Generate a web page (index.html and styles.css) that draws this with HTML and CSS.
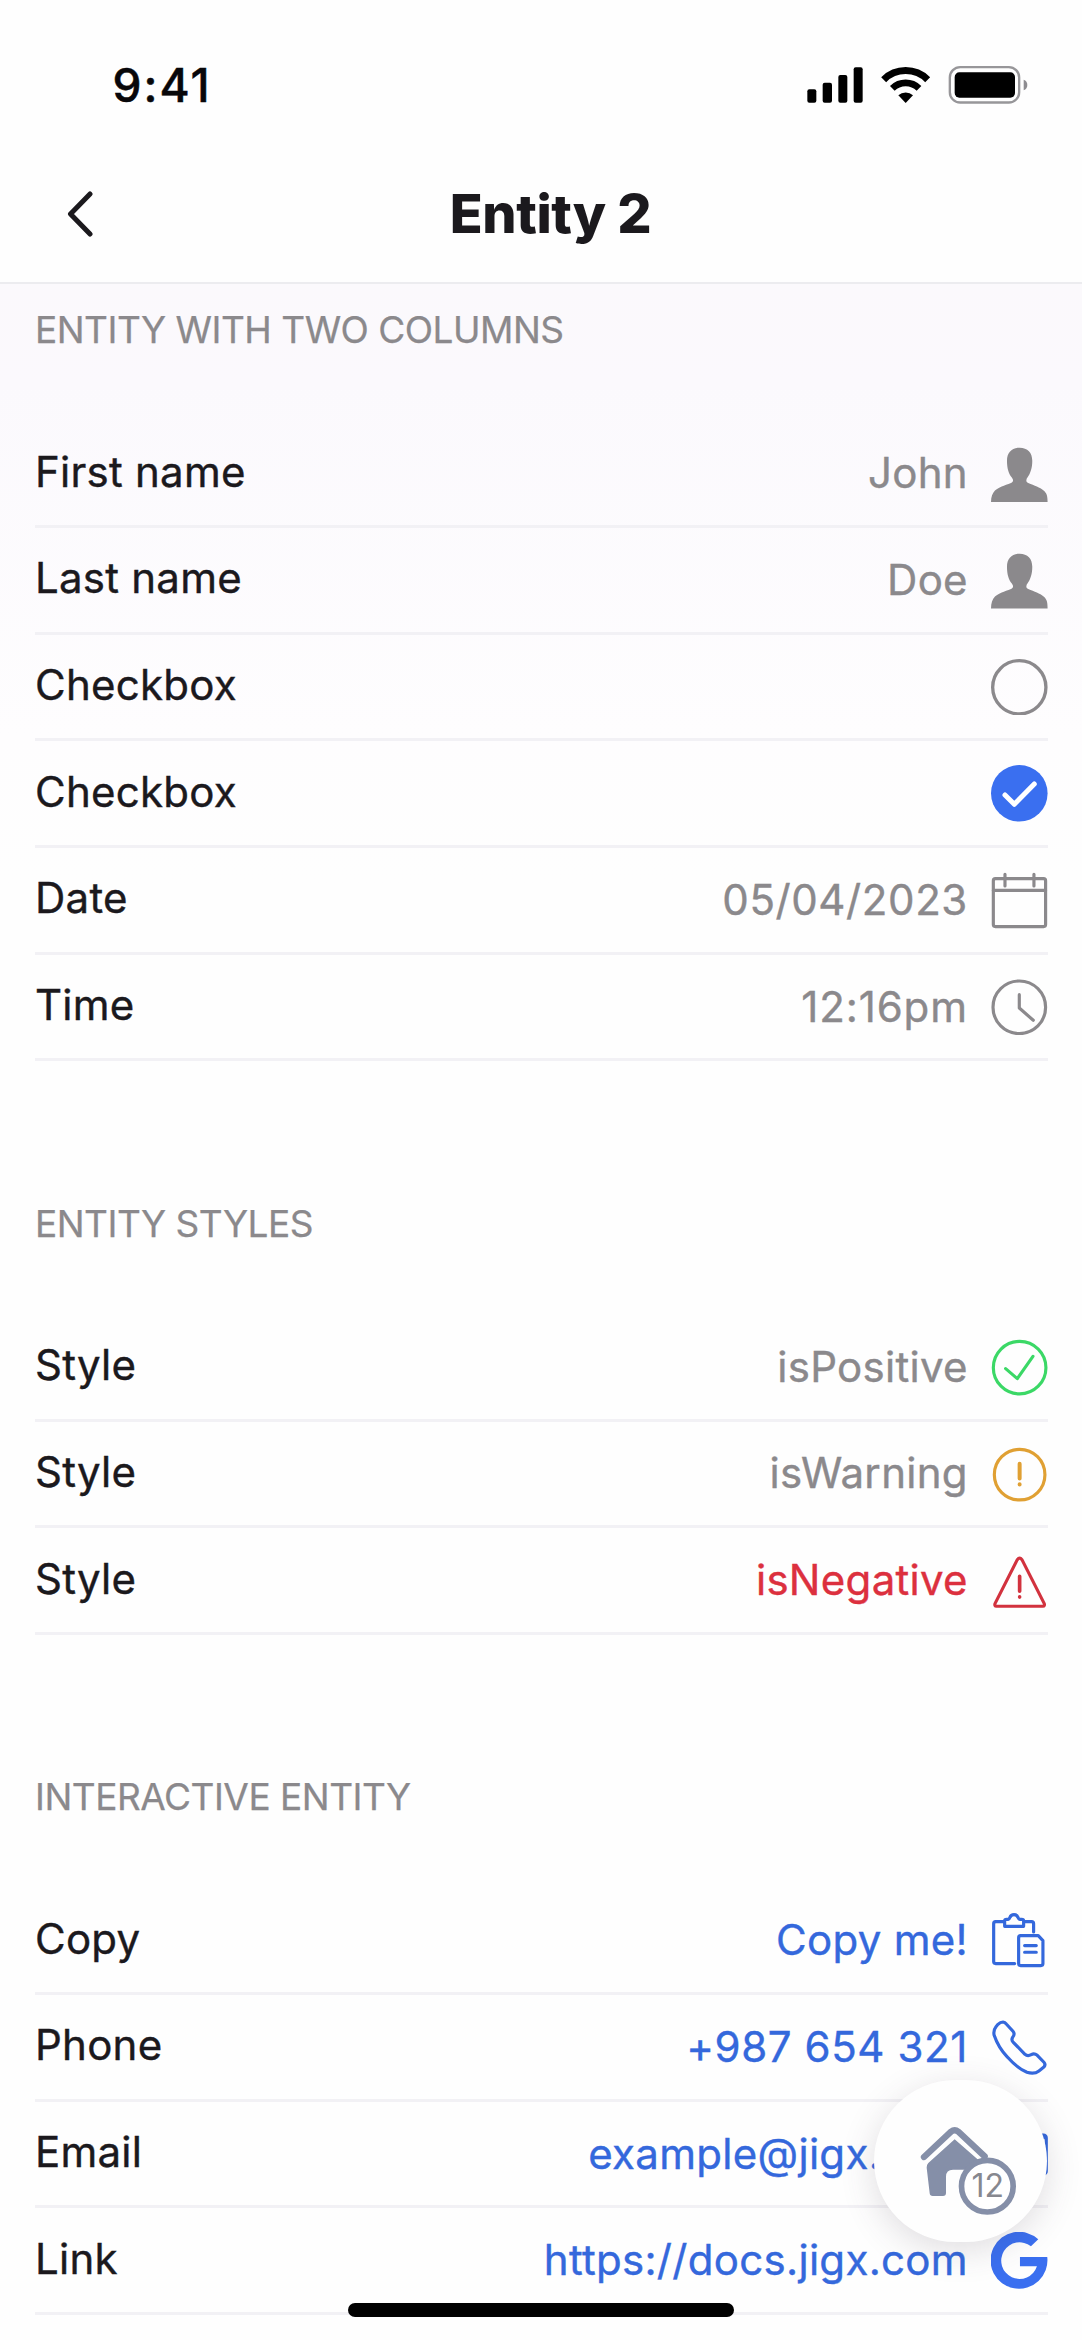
FILE: index.html
```
<!DOCTYPE html>
<html lang="en">
<head>
<meta charset="utf-8">
<title>Entity 2</title>
<link rel="stylesheet" href="styles.css">
</head>
<body>
<header class="header">
  <div class="status">
    <span class="time">9:41</span>
    <svg class="status-icons" viewBox="50 45 666 120">
      <rect x="54" y="118" width="27" height="40" rx="6"/>
      <rect x="100" y="98" width="28" height="60" rx="6"/>
      <rect x="147" y="75" width="27" height="83" rx="6"/>
      <rect x="193" y="52" width="27" height="106" rx="6"/>
      <path d="M283 89A93.5 93.5 0 0 1 415 89" fill="none" stroke="#000" stroke-width="21"/>
      <path d="M309 115A57 57 0 0 1 389 115" fill="none" stroke="#000" stroke-width="20"/>
      <path d="M349 159L327 136A32 32 0 0 1 371 136Z"/>
      <rect x="481.500" y="51.500" width="208" height="106" rx="31" fill="none" stroke="#979699" stroke-width="7"/>
      <rect x="496" y="67" width="181" height="76" rx="14"/>
      <path d="M703 89Q714 93 714 105Q714 117 703 121Z" fill="#8d8c90"/>
    </svg>
  </div>
  <nav class="nav">
    <svg class="back" viewBox="0 0 28 46"><path d="M25 3L5.500 23L25 43"/></svg>
    <h1 class="title">Entity 2</h1>
  </nav>
</header>
<main class="content">
  <section class="section">
    <h2 class="heading">ENTITY WITH TWO COLUMNS</h2>
    <div class="row"><span class="label">First name</span><span class="value">John</span>
      <svg class="icon solid" viewBox="0 0 170 170"><path d="M86 5C62 5 48 20 48 44C48 68 54 84 62 94C68 102 68 107 60 111C40 119 22 124 12 134C4 142 0 154 0 170H170C170 150 168 142 157 133C148 124 130 119 112 111C104 107 105 101 110 94C118 82 124 66 124 44C124 20 110 5 86 5Z"/></svg></div>
    <div class="row"><span class="label">Last name</span><span class="value">Doe</span>
      <svg class="icon solid" viewBox="0 0 170 170"><path d="M86 5C62 5 48 20 48 44C48 68 54 84 62 94C68 102 68 107 60 111C40 119 22 124 12 134C4 142 0 154 0 170H170C170 150 168 142 157 133C148 124 130 119 112 111C104 107 105 101 110 94C118 82 124 66 124 44C124 20 110 5 86 5Z"/></svg></div>
    <div class="row"><span class="label">Checkbox</span>
      <svg class="icon" viewBox="0 0 170 170"><circle cx="85" cy="85" r="80" stroke-width="10"/></svg></div>
    <div class="row"><span class="label">Checkbox</span>
      <svg class="icon" viewBox="0 0 170 170"><circle cx="85" cy="85" r="85" fill="#3a6ff0" stroke="none"/><path d="M42 90L70 118L130 57" stroke="#fff" stroke-width="15"/></svg></div>
    <div class="row"><span class="label">Date</span><span class="value numeric">05/04/2023</span>
      <svg class="icon" viewBox="0 0 170 170"><rect x="7" y="20" width="157" height="144" rx="6"/><path d="M7 55H164M42 7V42M129 7V42"/></svg></div>
    <div class="row"><span class="label">Time</span><span class="value time-value">12:16pm</span>
      <svg class="icon" viewBox="0 0 170 170"><circle cx="85" cy="85" r="79"/><path d="M85 47V87L127 124"/></svg></div>
  </section>
  <section class="section">
    <h2 class="heading">ENTITY STYLES</h2>
    <div class="row"><span class="label">Style</span><span class="value">isPositive</span>
      <svg class="icon positive" viewBox="0 0 170 170"><circle cx="86" cy="86" r="79"/><path d="M44 89L79 119L126 52"/></svg></div>
    <div class="row"><span class="label">Style</span><span class="value">isWarning</span>
      <svg class="icon warning" viewBox="0 0 170 170"><circle cx="86" cy="86" r="76"/><path d="M86 53V98M86 115V115.500" stroke-width="12"/></svg></div>
    <div class="row negative"><span class="label">Style</span><span class="value">isNegative</span>
      <svg class="icon" viewBox="0 0 170 170"><path d="M79 23Q86 14 93 23L160 155Q162 163 156 163H16Q10 163 12 155Z"/><path d="M86 73V118M86 135V135.500" stroke-width="11"/></svg></div>
  </section>
  <section class="section">
    <h2 class="heading">INTERACTIVE ENTITY</h2>
    <div class="row link"><span class="label">Copy</span><span class="value">Copy me!</span>
      <svg class="icon" viewBox="0 0 170 170"><path d="M41 29H14Q8 29 8 35V149Q8 155 14 155H71M98 29H122Q128 29 128 35V60M41 43V27Q41 22 47 22H52Q55 22 57 16Q60 8 69 8Q78 8 81 16Q83 22 87 22H92Q98 22 98 27V43ZM89 71H142L156 86V155Q156 161 150 161H89Q83 161 83 155V77Q83 71 89 71ZM101 101H136M101 121H136"/></svg></div>
    <div class="row link"><span class="label">Phone</span><span class="value numeric">+987 654 321</span>
      <svg class="icon" viewBox="0 0 170 170"><path d="M36 9Q28 9 21 16L15 23Q7 33 9 47Q22 86 50 115Q78 147 108 160Q130 167 144 156L157 146Q166 138 159 130L139 109Q130 102 121 107Q110 113 102 106L67 70Q60 63 65 55Q73 45 66 37L46 15Q42 10 36 9Z"/></svg></div>
    <div class="row link"><span class="label">Email</span><span class="value">example@jigx.com</span>
      <svg class="icon" viewBox="0 0 170 170"><rect x="4" y="27" width="162" height="117" rx="8"/><path d="M8 32L85 92L162 32"/></svg></div>
    <div class="row link"><span class="label">Link</span><span class="value">https://docs.jigx.com</span>
      <svg class="icon" viewBox="0 0 170 170"><path d="M142 22A85.500 85.500 0 1 0 169 75H87V103H138A55 55 0 1 1 120 43Z" fill="#3a6ff0" stroke="none"/></svg></div>
  </section>
</main>
<svg class="fab" viewBox="73 60 519 486">
  <path d="M223 291L304 215Q315 206 326 215L405 289" fill="none" stroke="#858fa8" stroke-width="19" stroke-linecap="round"/>
  <path d="M315 238L236 309Q230 315 231 323L240 400Q241 408 249 408H280Q289 408 289 399V350Q289 329 310 329H345L400 312Z" fill="#858fa8"/>
  <circle cx="413" cy="378.500" r="77.500" fill="#fff" stroke="#858fa8" stroke-width="17"/>
  <text class="fab-count" x="414" y="410">12</text>
</svg>
<div class="home-indicator"></div>
</body>
</html>
```
FILE: styles.css
```
* { box-sizing: border-box; }
body {
  position: relative;
  margin: 0;
  width: 1082px;
  height: 2340px;
  overflow: hidden;
  background: #fefefe;
  color: #1b191d;
  font-family: "Inter", "Liberation Sans", sans-serif;
}
.header {
  height: 284px;
  border-bottom: 2px solid #ececef;
  background: #fefefe;
}
.status {
  display: flex;
  align-items: center;
  justify-content: space-between;
  height: 170px;
  padding: 0 54px 0 112.500px;
}
.time {
  color: #08070a;
  font-size: 46px;
  font-weight: 500;
  letter-spacing: 2px;
  -webkit-text-stroke: 0.500px currentColor;
}
.status-icons { width: 222px; height: 40px; }
.nav {
  display: grid;
  grid-template-columns: 1fr auto 1fr;
  align-items: center;
  height: 87px;
  padding: 0 46px 0 65px;
}
.back {
  width: 28px;
  height: 46px;
  fill: none;
  stroke: #1b191d;
  stroke-width: 5;
  stroke-linecap: round;
  stroke-linejoin: round;
}
.title {
  margin: 0;
  font-size: 54px;
  font-weight: 800;
  line-height: 66px;
  letter-spacing: -0.400px;
}
.content {
  display: flex;
  flex-direction: column;
  gap: 138.400px;
  height: 2056px;
  padding: 22.400px 34.500px 0 35px;
  background: linear-gradient(#fbf9fc 0, #fbf9fd 100px, #fefdfe 450px, #fefefe 600px);
}
.heading {
  margin: 0 0 68.100px;
  padding-top: 1px;
  color: #8b898c;
  font-size: 37px;
  font-weight: 400;
  line-height: 46px;
  letter-spacing: -0.500px;
  -webkit-text-stroke: 0.250px currentColor;
}
.row {
  display: flex;
  align-items: center;
  height: 106.670px;
  border-bottom: 3px solid #f2f1f5;
  font-size: 42px;
  line-height: 52px;
  -webkit-text-stroke: 0.400px currentColor;
}
.label {
  flex: 1;
  padding-bottom: 3px;
  letter-spacing: 0.250px;
}
.value {
  margin-right: 23px;
  color: #8b898c;
  letter-spacing: 0.300px;
}
.numeric { letter-spacing: 0.600px; }
.time-value { letter-spacing: 0.900px; }
.icon {
  width: 56.600px;
  height: 56.600px;
  margin-top: 1px;
  fill: none;
  stroke: #8b898c;
  stroke-width: 9.500;
  stroke-linecap: round;
  stroke-linejoin: round;
}
.solid { fill: #8b898c; stroke: none; }
.positive { stroke: #3bd866; }
.warning { stroke: #e0a033; }
.negative .value { color: #dc303e; }
.negative .icon { stroke: #d2323e; }
.link .value { color: #3468dc; }
.link .icon { stroke: #3468dc; }
.fab {
  position: absolute;
  left: 874.300px;
  top: 2080px;
  width: 173px;
  height: 162px;
  border-radius: 81px;
  background: #fefefe;
  box-shadow: 0 8px 34px rgba(70, 60, 80, 0.17);
}
.fab-count {
  fill: #87888f;
  font-size: 96px;
  text-anchor: middle;
}
.home-indicator {
  position: absolute;
  left: 348.300px;
  top: 2303px;
  width: 386px;
  height: 13.500px;
  border-radius: 7px;
  background: #000;
}
```
